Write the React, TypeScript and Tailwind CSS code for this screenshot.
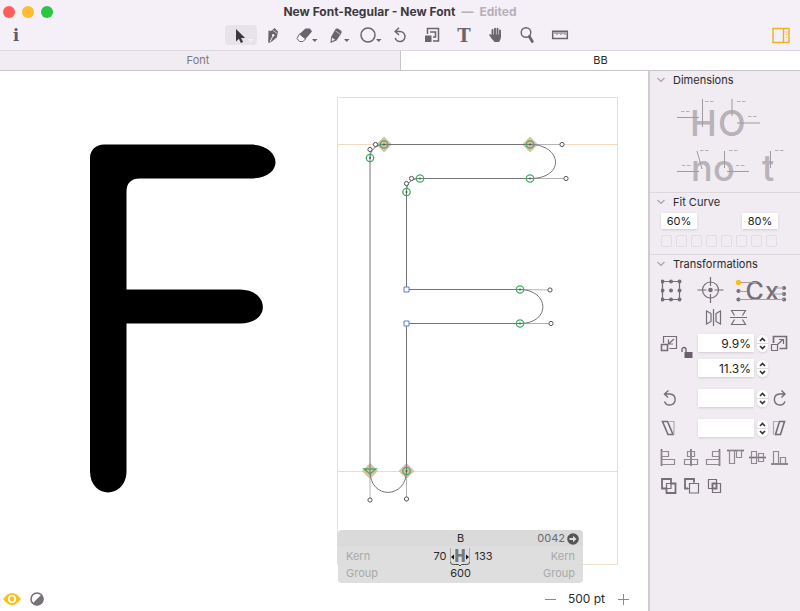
import { useState } from 'react';
import type { ReactNode } from 'react';

const CONTOUR =
  'M370 158 C370 150 376 144.500 384 144.500 L530 144.500 C562 144.500 566 178.500 530 178.500 L420 178.500 C411 178.500 406.500 183 406.500 192 L406.500 289.500 L520 289.500 C550 290 551 323.500 520 323.500 L406.500 323.500 L406.500 471 C406.500 499 370 500 370 471 Z';

function Arrow() {
  return <path d="M23 14h5.500l-2.750 3z" fill="#6b646d" />;
}

interface ToolProps {
  label: string;
  active?: boolean;
  onClick: () => void;
  children: ReactNode;
}

function Tool({ label, active, onClick, children }: ToolProps) {
  return (
    <button
      aria-label={label}
      aria-pressed={active}
      onClick={onClick}
      className={`h-5 w-8 rounded ${active ? 'bg-[#e8e2ea]' : ''}`}
    >
      <svg viewBox="0 0 32 20" className="h-5 w-8 overflow-visible" fill="none" stroke="none">
        {children}
      </svg>
    </button>
  );
}

const tools: { label: string; icon: ReactNode }[] = [
  {
    label: 'Select',
    icon: (
      <>
        <path d="M11 4v12.500l2.900-2.700 2 4.300 2.200-1-2-4.200h4z" fill="#3b373c" />
        <path d="M23 14h5l-2.500 3z" fill="#f8f4f9" />
      </>
    ),
  },
  {
    label: 'Draw',
    icon: (
      <>
        <path d="M11.500 5.500l2.500 .500 3.500-3 3.500 3.500-1.200 6-4.300 3.500-3.500 2-.800-.500z" fill="#6b646d" />
        <path d="M13 16.500l3-5.500" stroke="#f5eff7" strokeWidth="1" />
        <path d="M15.500 5l4.500 3.200" stroke="#f5eff7" strokeWidth=".7" />
        <circle cx="16.200" cy="10.300" r="1.200" fill="#f5eff7" />
      </>
    ),
  },
  {
    label: 'Erase',
    icon: (
      <>
        <path d="M16.500 3.500h4.500l2 3-6.500 7.500-6-5z" fill="#6b646d" />
        <path d="M10.500 9l6 5-2.500 2.500h-3.500l-2.500-3z" stroke="#6b646d" fill="#fbf8fc" />
        <Arrow />
      </>
    ),
  },
  {
    label: 'Pencil',
    icon: (
      <>
        <path d="M14.500 4l2-.800 4 2.800v2l-5 7.500-6 2.500.500-6z" fill="#6b646d" />
        <path d="M10.800 12.500l3.200 2.200-3.200 1.500z" fill="#f5eff7" />
        <path d="M14.500 6l4.500 3" stroke="#f5eff7" strokeWidth=".6" />
        <Arrow />
      </>
    ),
  },
  {
    label: 'Primitives',
    icon: (
      <>
        <circle cx="15" cy="10" r="7" stroke="#6b646d" strokeWidth="1.500" />
        <Arrow />
      </>
    ),
  },
  {
    label: 'Rotate',
    icon: (
      <>
        <path d="M10.500 6.500h4.500a5 5 0 1 1-4.800 6.500" stroke="#6b646d" strokeWidth="1.500" />
        <path d="M14 2.800L10.200 6.500 14 10" stroke="#6b646d" strokeWidth="1.500" />
      </>
    ),
  },
  {
    label: 'Scale',
    icon: (
      <>
        <path d="M8 10.500h6.500v6.500H8z" fill="#6b646d" />
        <path d="M10.500 9V3.500h11v12.500h-5.500" stroke="#6b646d" strokeWidth="1.500" />
        <path d="M13 7h5.500v5h-2.500" stroke="#6b646d" strokeWidth="1.500" />
      </>
    ),
  },
  {
    label: 'Text',
    icon: (
      <text x="15" y="16.500" textAnchor="middle" fill="#6b646d" className="font-['DejaVu_Serif'] text-[18px] font-bold">
        T
      </text>
    ),
  },
  {
    label: 'Hand',
    icon: (
      <>
        <path
          d="M11.500 5v6M14 3.800v7M16.500 3.800v7M19 5.500v6M9.200 10l2.500 3.500"
          stroke="#6b646d"
          strokeWidth="1.900"
          strokeLinecap="round"
        />
        <path d="M11 9.500h9c0 4-.500 5.500-2 7.500h-4.500L10 12.500z" fill="#6b646d" />
      </>
    ),
  },
  {
    label: 'Zoom',
    icon: (
      <>
        <circle cx="13" cy="7.500" r="4.800" stroke="#6b646d" strokeWidth="1.400" />
        <path d="M16.300 11.500l3 5" stroke="#6b646d" strokeWidth="2.800" strokeLinecap="round" />
      </>
    ),
  },
  {
    label: 'Measure',
    icon: (
      <>
        <path d="M7.700 6.200h14.600v7.300H7.700z" stroke="#6b646d" strokeWidth="1.500" />
        <path d="M10 7v2M12 7v3M14 7v2M16 7v3M18 7v2M20 7v3" stroke="#6b646d" strokeWidth="1" />
      </>
    ),
  },
];

function Toolbar() {
  const [tool, setTool] = useState('Select');
  return (
    <div className="flex h-[26px] items-start justify-between pl-0.5 pt-px">
      <button aria-label="Info" className="h-5 w-8">
        <svg viewBox="0 0 32 20" className="h-5 w-8 overflow-visible">
          <text x="14" y="16" textAnchor="middle" fill="#5f5961" className="font-['DejaVu_Serif'] text-[16px] font-bold">
            i
          </text>
        </svg>
      </button>
      <div className="flex">
        {tools.map((t) => (
          <Tool key={t.label} label={t.label} active={tool === t.label} onClick={() => setTool(t.label)}>
            {t.icon}
          </Tool>
        ))}
      </div>
      <button aria-label="Toggle sidebar" className="h-5 w-8">
        <svg viewBox="0 0 32 20" className="h-5 w-8" fill="none" stroke="#efb023">
          <path d="M5 3.500h16v14H5zM15.500 3.500v14" strokeWidth="1.400" />
          <path d="M17.500 7h2M17.500 9.500h2M17.500 12h2" strokeWidth="1" opacity=".7" />
        </svg>
      </button>
    </div>
  );
}

const handles = [
  [375.5, 144.5], [370, 149.5], [562, 144.5], [566, 178.500], [411.500, 178.500], [406.500, 183.500],
  [550, 290], [551, 323.500], [370, 500], [406.500, 499],
];
const smooth = [
  [384, 144.500], [370, 158], [530, 144.500], [530, 178.500], [420, 178.500], [406.500, 192],
  [520, 289.500], [520, 323.500], [406.500, 471],
];
const diamonds = [[384, 144.500], [530, 144.500], [370, 471], [406.500, 471]];
const corners = [[406.500, 289.500], [406.500, 323.500]];

function GlyphDrawing() {
  return (
    <svg viewBox="0 71 648 540" preserveAspectRatio="xMinYMin meet" className="absolute inset-0 h-full w-full" fill="none">
      <path d={CONTOUR} transform="translate(-280 0)" fill="#000" />
      <g stroke="#ecdcc9">
        <path d="M337.500 97.500h280v467h-280z" />
        <path d="M337 144.500h281M337 471.500h281" stroke="#f2d9c0" />
      </g>
      <g fill="#dcc0a6">
        {diamonds.map(([x, y]) => (
          <path key={`${x}-${y}`} d={`M${x} ${y - 8}l8 8-8 8-8-8z`} />
        ))}
      </g>
      <path
        d="M530 144.500h32M530 178.500h36M520 289.500L550 290M520 323.500h31M370 471v29M406.500 471v28M370 158v-8.500M384 144.500h-8.500M420 178.500h-8.500M406.500 192v-8.500"
        stroke="#b3b3b3"
      />
      <path d={CONTOUR} stroke="#747474" />
      <g stroke="#555" fill="#fff">
        {handles.map(([x, y]) => (
          <circle key={`${x}-${y}`} cx={x} cy={y} r="2.100" />
        ))}
      </g>
      <g stroke="#3fae66" strokeWidth="1.300">
        {smooth.map(([x, y]) => (
          <circle key={`${x}-${y}`} cx={x} cy={y} r="3.700" />
        ))}
        <path d="M364 469h12l-6 5z" />
      </g>
      <g fill="#555">
        {smooth.map(([x, y]) => (
          <circle key={`${x}-${y}`} cx={x} cy={y} r="1" />
        ))}
      </g>
      <g stroke="#5d7dd0" fill="#fff">
        {corners.map(([x, y]) => (
          <path key={`${x}-${y}`} d={`M${x - 2.5} ${y - 2.5}h5v5h-5z`} />
        ))}
      </g>
    </svg>
  );
}

function GlyphInfo() {
  return (
    <div className="absolute left-[338px] top-[459px] w-[245px] overflow-hidden rounded text-[11px] leading-[17px] text-[#2b2b2b]">
      <div className="grid h-4 grid-cols-3 items-center bg-[#dadada] px-1">
        <span />
        <span className="text-center">B</span>
        <span className="flex items-center justify-end gap-0.5 text-[#6a6a6a]">
          0042
          <svg viewBox="0 0 12 12" className="h-3 w-3">
            <circle cx="6" cy="6" r="5.800" fill="#555" />
            <path d="M2.500 5h3.500V2.800L9.500 6 6 9.200V7H2.500z" fill="#dedede" />
          </svg>
        </span>
      </div>
      <div className="bg-[#dcdcdc]/95 px-2 pb-px pt-0.5">
        <div className="grid grid-cols-3 items-center">
          <span className="text-[#a9a9a9]">Kern</span>
          <span className="flex items-center justify-center gap-1">
            <span className="w-5 text-right">70</span>
            <svg viewBox="0 0 20 17" className="h-[17px] w-5 shrink-0 overflow-visible">
              <text x="10" y="13.500" textAnchor="middle" fill="#777" className="font-['Liberation_Mono'] text-[20px] font-bold">
                H
              </text>
              <path d="M.500 0v14M19.500 0v14" stroke="#aaa" />
              <path d="M.500 14c0 2.500 2 2.500 5 2.500h3l1.500 1.500 1.500-1.500h3c3 0 5 0 5-2.500" fill="none" stroke="#444" />
              <path d="M1 9l3-2.500v5zM19 9l-3-2.500v5z" fill="#111" />
            </svg>
            <span className="w-5">133</span>
          </span>
          <span className="text-right text-[#a9a9a9]">Kern</span>
        </div>
        <div className="grid grid-cols-3 text-[#a9a9a9]">
          <span>Group</span>
          <span className="text-center text-[#2b2b2b]">600</span>
          <span className="text-right">Group</span>
        </div>
      </div>
    </div>
  );
}

function StatusBar() {
  const [size, setSize] = useState(500);
  return (
    <div className="absolute inset-x-0 bottom-0 flex h-6 items-center justify-between pl-[3px] pr-[19px]">
      <div className="flex items-center gap-[9px]">
        <button aria-label="Show preview">
          <svg viewBox="0 0 18 14" className="h-3.5 w-[18px]">
            <path d="M0 7Q4.500 1 9 1t9 6Q13.500 13 9 13T0 7z" fill="#fbbf1d" />
            <circle cx="9" cy="7" r="3.200" fill="none" stroke="#fff" strokeWidth="1.600" />
          </svg>
        </button>
        <button aria-label="Invert">
          <svg viewBox="0 0 14 14" className="h-3.5 w-3.5">
            <circle cx="7" cy="7" r="6" fill="#fff" stroke="#77717a" strokeWidth="1.600" />
            <path d="M11.500 2.500A6.300 6.300 0 1 1 2.500 11.500z" fill="#77717a" />
          </svg>
        </button>
      </div>
      <div className="flex items-center gap-3 text-[12px] leading-4 text-[#2b2b2b]">
        <button aria-label="Smaller" onClick={() => setSize(size - 50)}>
          <svg viewBox="0 0 12 12" className="h-3 w-3" stroke="#8a8a8a">
            <path d="M1 6.500h11" />
          </svg>
        </button>
        <span>{size} pt</span>
        <button aria-label="Larger" onClick={() => setSize(size + 50)}>
          <svg viewBox="0 0 12 12" className="h-3 w-3" stroke="#8a8a8a">
            <path d="M1 6.500h11M6.500 1v11" />
          </svg>
        </button>
      </div>
    </div>
  );
}

function Section({ title, children }: { title: string; children: ReactNode }) {
  return (
    <section className="border-b border-[#dcd6de] last:border-b-0">
      <h2>
        <button className="flex h-[18px] items-center gap-2 pl-[7px] text-[11px] leading-4 text-[#2b2a2c]">
          <svg viewBox="0 0 8 6" className="h-1.5 w-2" fill="none" stroke="#a9a3ab" strokeWidth="1.200">
            <path d="M.500 1L4 4.500 7.500 1" />
          </svg>
          {title}
        </button>
      </h2>
      {children}
    </section>
  );
}

function DimensionsDrawing() {
  const dashes = [
    [685, 115], [709, 105], [741, 105], [752, 120], [686, 169], [704, 154], [733, 154], [740, 169], [779, 154],
  ];
  return (
    <svg viewBox="650 89 150 103" className="h-[103px] w-full" fill="none">
      <g fill="#b8b2b9" className="text-[36px] font-medium">
        <text x="690" y="136">H</text>
        <text x="718" y="136">O</text>
        <text x="691" y="181">n</text>
        <text x="713" y="181">o</text>
        <text x="762" y="181">t</text>
      </g>
      <path
        d="M677 117.500h22M702.500 99v28M732 99v17M737 123h23M677 171.500h22M697 151l5 18M724.500 151v17M727 171.500h22M770.500 151v17"
        stroke="#a09aa1"
      />
      <path d={dashes.map(([x, y]) => `M${x - 4} ${y - 3.5}h3.500m1.500 0h3.500`).join('')} stroke="#b5afb6" />
    </svg>
  );
}

function Stepper({ label }: { label: string }) {
  return (
    <button aria-label={label} className="h-[17px] w-[11px] rounded-full bg-white shadow-sm">
      <svg viewBox="0 0 11 17" className="h-[17px] w-[11px]" fill="none" stroke="#333" strokeWidth="1.600">
        <path d="M0 8.500h11" stroke="#ddd" strokeWidth="1" />
        <path d="M3 6l2.500-2.500L8 6M3 11l2.500 2.500L8 11" />
      </svg>
    </button>
  );
}

interface FieldRowProps {
  label: string;
  value: string;
  left?: ReactNode;
  right?: ReactNode;
}

function FieldRow({ label, value, left, right }: FieldRowProps) {
  return (
    <div className="flex h-[18px] items-center gap-[3px]">
      <div className="flex w-[34px] shrink-0 items-center">{left}</div>
      <input
        aria-label={label}
        defaultValue={value}
        className="h-[18px] w-14 bg-white px-[3px] text-right text-[12px] leading-4 text-[#222] shadow-sm outline-none"
      />
      <Stepper label={`${label} step`} />
      {right}
    </div>
  );
}

function Glyph({ label, children }: { label: string; children: ReactNode }) {
  return (
    <button aria-label={label} className="shrink-0">
      <svg viewBox="0 0 17 17" className="h-[17px] w-[17px] overflow-visible" fill="none" stroke="#756e77" strokeWidth="1.200">
        {children}
      </svg>
    </button>
  );
}

function Transformations() {
  return (
    <div className="pl-[11px]">
      <div className="flex h-[34px] items-center">
        <svg viewBox="661 273 130 34" className="h-[34px] w-[130px]" fill="none" stroke="#756e77" strokeWidth="1.200">
          <path d="M662.500 281.500h17v18h-17z" />
          <g fill="#756e77" stroke="none">
            {[662.5, 671, 679.5].map((x) =>
              [281.5, 290.5, 299.5].map((y) => <circle key={`${x}-${y}`} cx={x} cy={y} r="2" />)
            )}
            <circle cx="710.500" cy="290" r="2.300" />
            <circle cx="738.500" cy="291" r="2.100" />
            <circle cx="738.500" cy="299.500" r="2.100" />
            <circle cx="784" cy="288" r="2.100" />
            <circle cx="784" cy="294" r="2.100" />
            <circle cx="784" cy="299.500" r="2.100" />
            <text x="745.500" y="300" className="text-[25px] font-medium">C</text>
            <text x="765" y="300" className="text-[25px] font-medium">x</text>
          </g>
          <circle cx="710.500" cy="290" r="8" />
          <path d="M697.500 290h9M714.500 290h9M710.500 277v9M710.500 294v9" />
          <path d="M739 282.500h18M739 291.500h8M739 299.500h45M775 288h9M772 294h12" stroke="#a59ea6" strokeWidth="1" />
          <circle cx="738.500" cy="282.500" r="2.700" fill="#fdbe1c" stroke="none" />
        </svg>
      </div>
      <div className="flex h-5 items-center gap-2 pl-11">
        <Glyph label="Flip horizontal">
          <path d="M8.500 0v17M6 4.500L1.500 2v13L6 12.500zM11 4.500L15.500 2v13L11 12.500z" />
        </Glyph>
        <Glyph label="Flip vertical">
          <path d="M0 8.500h17M4.500 6.500L1.500 1.500h14L12.500 6.500M4.500 10.500L1.500 15.500h14L12.500 10.500" />
        </Glyph>
      </div>

      <div className="relative mt-[7px] flex flex-col gap-[7px]">
        <FieldRow
          label="Scale horizontal"
          value="9.9%"
          left={
            <Glyph label="Scale down">
              <path d="M.500 9.500h6v6h-6z" strokeWidth="1.600" />
              <path d="M2.500 8V1.500h13v12h-7M13 4L7.500 9M7.500 4.500V9H12" />
            </Glyph>
          }
          right={
            <Glyph label="Scale up">
              <path d="M.500 9.500h6v6h-6z" />
              <path d="M2.500 8V1.500h13v12h-7" strokeWidth="1.700" />
              <path d="M6.500 9.500L12 4.500M8 4.500h4.500V9" />
            </Glyph>
          }
        />
        <FieldRow label="Scale vertical" value="11.3%" />
        <button aria-label="Lock proportions" className="absolute left-5 top-3">
          <svg viewBox="0 0 12 13" className="h-[13px] w-3">
            <path d="M3.500 6h8v6h-8z" fill="#68616a" />
            <path d="M1 6V3.500a2 2 0 0 1 4 0V6" fill="none" stroke="#68616a" strokeWidth="1.300" />
          </svg>
        </button>
      </div>

      <div className="mt-3 flex flex-col gap-3">
        <FieldRow
          label="Rotate"
          value=""
          left={
            <Glyph label="Rotate left">
              <path d="M3.500 4H9a5.500 5.500 0 1 1-5.500 7.500M7.500 .500L3.500 4 7 7.500" strokeWidth="1.400" />
            </Glyph>
          }
          right={
            <Glyph label="Rotate right">
              <path d="M14 4H8.500a5.500 5.500 0 1 0 5.500 7.500M10.500 .500L14 4 10.500 7.500" strokeWidth="1.400" />
            </Glyph>
          }
        />
        <FieldRow
          label="Slant"
          value=""
          left={
            <Glyph label="Slant left">
              <path d="M1.500 1.500h5l5.500 13h-5z" strokeWidth="1.600" />
              <path d="M8 1.500h5v13" stroke="#b0a9b1" />
            </Glyph>
          }
          right={
            <Glyph label="Slant right">
              <path d="M8.500 1.500h5l-4 13h-5z" strokeWidth="1.600" />
              <path d="M7.500 1.500h-5v13" stroke="#b0a9b1" />
            </Glyph>
          }
        />
      </div>

      <div className="mt-3 flex gap-[5px]">
        <Glyph label="Align left">
          <path d="M.500 0v17" strokeWidth="1.600" />
          <path d="M.500 2.500h7v5h-7zM.500 10.500h13v5h-13z" stroke="#908992" />
        </Glyph>
        <Glyph label="Align centre">
          <path d="M8 0v17" strokeWidth="1.600" />
          <path d="M4.500 2.500h7v5h-7zM1.500 10.500h13v5h-13z" stroke="#908992" />
        </Glyph>
        <Glyph label="Align right">
          <path d="M14.500 0v17" strokeWidth="1.600" />
          <path d="M7.500 2.500h7v5h-7zM1.500 10.500h13v5h-13z" stroke="#908992" />
        </Glyph>
        <Glyph label="Align top">
          <path d="M0 1.500h17" strokeWidth="1.600" />
          <path d="M2.500 1.500h5v13h-5zM9.500 1.500h5v7h-5z" stroke="#908992" />
        </Glyph>
        <Glyph label="Align middle">
          <path d="M0 8.500h17" strokeWidth="1.600" />
          <path d="M2.500 2.500h5v12h-5zM9.500 4.500h5v8h-5z" stroke="#908992" />
        </Glyph>
        <Glyph label="Align bottom">
          <path d="M0 15h17" strokeWidth="1.600" />
          <path d="M2.500 2.500h5v12.500h-5zM9.500 8.500h5v6.500h-5z" stroke="#908992" />
        </Glyph>
      </div>
      <div className="mt-3 flex gap-1.5">
        <Glyph label="Union">
          <path d="M1 1h9v4.500h4.500V15h-9v-4.500H1z" strokeWidth="1.800" />
          <path d="M5.500 10.500v-5H10v5z" />
        </Glyph>
        <Glyph label="Subtract">
          <path d="M10 4V1H1v9.500h3" strokeWidth="1.800" />
          <path d="M10 4v1.500H5.500v5H4M5.500 5.500h9v9.500h-9z" />
        </Glyph>
        <Glyph label="Intersect">
          <path d="M1.500 1.500h8v9h-8zM5.500 5.500h8v9h-8z" />
          <path d="M5.500 5.500h4v5h-4z" strokeWidth="1.800" />
        </Glyph>
      </div>
    </div>
  );
}

function Sidebar() {
  return (
    <aside className="w-[152px] shrink-0 border-l-2 border-[#d0cad3] bg-[#f1ebf2]">
      <Section title="Dimensions">
        <DimensionsDrawing />
      </Section>
      <Section title="Fit Curve">
        <div className="px-[11px] pb-[7px] pt-0.5">
          <div className="flex justify-between pr-[11px]">
            <input
              aria-label="Minimum curve"
              defaultValue="60%"
              className="h-4 w-9 bg-white text-center text-[11px] leading-4 text-[#222] shadow-sm outline-none"
            />
            <input
              aria-label="Maximum curve"
              defaultValue="80%"
              className="h-4 w-9 bg-white text-center text-[11px] leading-4 text-[#222] shadow-sm outline-none"
            />
          </div>
          <div className="mt-1.5 flex gap-1">
            {Array.from({ length: 8 }, (_, i) => (
              <button
                key={i}
                aria-label={`Curve step ${i + 1}`}
                className="h-3 w-[11px] rounded-xs border border-[#e3dce4]"
              />
            ))}
          </div>
        </div>
      </Section>
      <Section title="Transformations">
        <Transformations />
      </Section>
    </aside>
  );
}

export default function App() {
  return (
    <div className="flex min-h-screen flex-col bg-white font-[Inter,sans-serif]">
      <header className="border-b border-[#dcd6de] bg-[#f5eff7]">
        <div className="grid h-6 grid-cols-[1fr_auto_1fr] items-center">
          <div className="flex gap-[7px] pl-[3px]">
            <button aria-label="Close" className="h-3 w-3 rounded-full bg-[#ff5f57]" />
            <button aria-label="Minimise" className="h-3 w-3 rounded-full bg-[#febc2e]" />
            <button aria-label="Full screen" className="h-3 w-3 rounded-full bg-[#28c840]" />
          </div>
          <h1 className="flex gap-1.5 text-[12px] font-bold leading-4 text-[#3d3a3e]">
            New Font-Regular - New Font
            <span className="text-[#b6b0b8]">—</span>
            <span className="text-[#b6b0b8]">Edited</span>
          </h1>
        </div>
        <Toolbar />
      </header>
      <nav className="grid h-5 grid-cols-2 border-b border-[#c9c4cb] text-[11px] leading-[19px]">
        <button className="bg-[#f1ebf2] pr-1 text-[#7d7780]">Font</button>
        <button className="border-l border-[#c9c4cb] bg-white text-[#2b2b2b]">BB</button>
      </nav>
      <div className="flex flex-1">
        <main className="relative flex-1">
          <GlyphDrawing />
          <GlyphInfo />
          <StatusBar />
        </main>
        <Sidebar />
      </div>
    </div>
  );
}
